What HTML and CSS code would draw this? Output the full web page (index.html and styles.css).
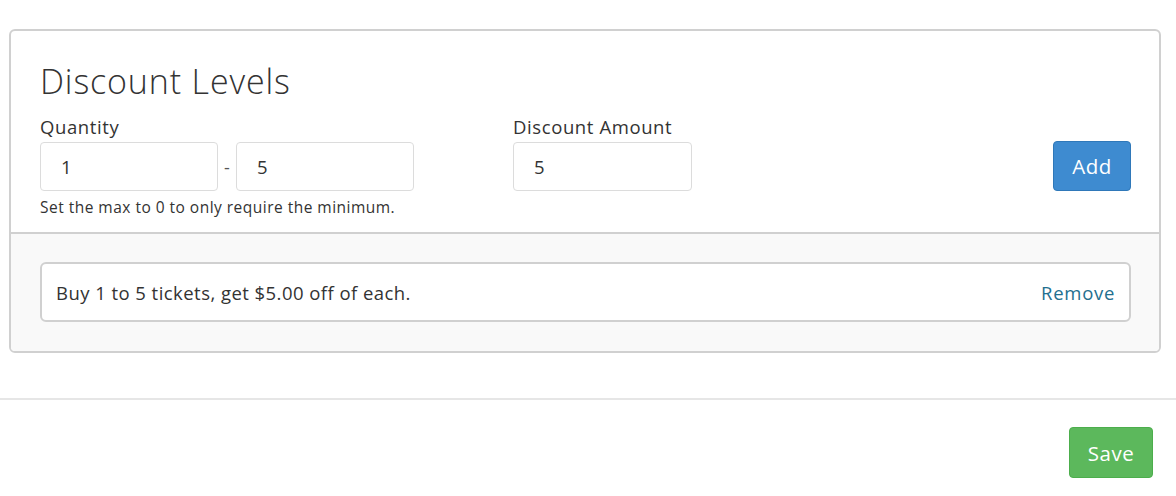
FILE: index.html
```html
<!DOCTYPE html>
<html>
<head>
<meta charset="utf-8">
<link rel="stylesheet" href="styles.css">
</head>
<body>
<div class="card">
  <div class="card-head">
    <h2 class="title">Discount Levels</h2>
    <div class="form-row">
      <div class="group qty">
        <label class="lbl">Quantity</label>
        <div class="range">
          <input class="inp inp-range" type="text" value="1">
          <span class="dash">-</span>
          <input class="inp inp-range" type="text" value="5">
        </div>
        <div class="help">Set the max to 0 to only require the minimum.</div>
      </div>
      <div class="group amt">
        <label class="lbl">Discount Amount</label>
        <input class="inp" type="text" value="5">
      </div>
      <button class="btn btn-add">Add</button>
    </div>
  </div>
  <div class="card-foot">
    <div class="level">
      <span>Buy 1 to 5 tickets, get $5.00 off of each.</span>
      <a class="remove" href="#">Remove</a>
    </div>
  </div>
</div>
<hr class="sep">
<div class="actions">
  <button class="btn btn-save">Save</button>
</div>
</body>
</html>
```
FILE: styles.css
```css
* { box-sizing: border-box; }
body {
  margin: 0;
  font-family: "Open Sans", "Liberation Sans", sans-serif;
  color: #333;
  background: #fff;
}
.card {
  margin: 29px 15px 0 9px;
  border: 2px solid #d0d0d0;
  border-radius: 6px;
  overflow: hidden;
}
.card-head {
  padding: 28px 28px 15px 29px;
}
.title {
  margin: 0 0 12px;
  font-weight: 300;
  font-size: 34px;
  line-height: 44px;
  letter-spacing: 0.85px;
  color: #333;
}
.form-row {
  display: flex;
  align-items: flex-start;
}
.group { display: flex; flex-direction: column; }
.qty { width: 374px; }
.amt { margin-left: 99px; }
.lbl {
  font-size: 18.5px;
  line-height: 24px;
  letter-spacing: 0.6px;
  margin-bottom: 3px;
}
.range { display: flex; align-items: center; }
.dash {
  width: 18px;
  text-align: center;
  font-size: 18px;
  color: #555;
}
.inp {
  width: 179px;
  height: 49px;
  border: 1px solid #dcdcdc;
  border-radius: 4px;
  padding: 0 0 0 20px;
  font-family: inherit;
  font-size: 18.5px;
  color: #333;
  background: #fff;
}
.inp-range { width: 178px; }
.help {
  font-size: 15.5px;
  line-height: 20px;
  letter-spacing: 0.48px;
  margin-top: 6px;
  color: #333;
}
.btn {
  font-family: inherit;
  font-size: 20.5px;
  letter-spacing: 0.5px;
  color: #fff;
  border-radius: 4px;
  cursor: pointer;
}
.btn-add {
  margin-left: auto;
  margin-top: 26px;
  width: 78px;
  height: 50px;
  background: #3e8bd0;
  border: 1px solid #2f78b9;
}
.card-foot {
  border-top: 2px solid #d0d0d0;
  background: #f9f9f9;
  padding: 28px 28px 29px 29px;
}
.level {
  display: flex;
  align-items: center;
  justify-content: space-between;
  height: 60px;
  border: 2px solid #d0d0d0;
  border-radius: 6px;
  background: #fff;
  padding: 0 14px 0 14px;
  font-size: 18.5px;
  letter-spacing: 0.45px;
}
.remove {
  color: #236f8f;
  text-decoration: none;
  letter-spacing: 0.7px;
}
.sep {
  margin: 45px 0 0;
  border: 0;
  border-top: 2px solid #e6e6e6;
}
.actions {
  display: flex;
  justify-content: flex-end;
  padding: 27px 23px 0 0;
}
.btn-save {
  width: 84px;
  height: 51px;
  background: #5cb85c;
  border: 1px solid #4cae4c;
}
```
